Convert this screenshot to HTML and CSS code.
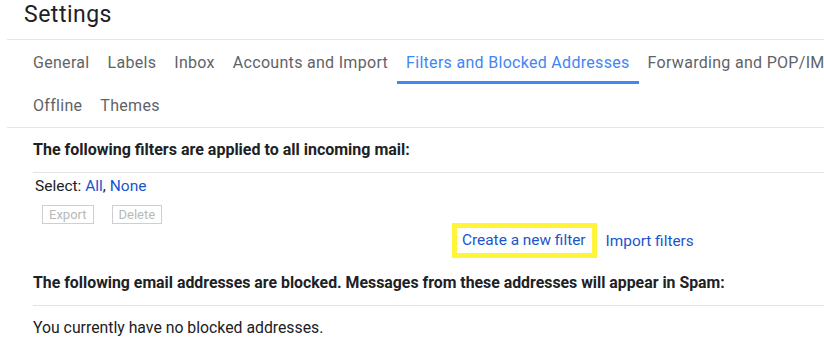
FILE: index.html
```html
<!DOCTYPE html>
<html>
<head>
<meta charset="utf-8">
<link rel="stylesheet" href="styles.css">
</head>
<body>
<div class="page">
  <div class="title">Settings</div>
  <div class="tabs">
    <div class="tab-row">
      <span class="tab">General</span>
      <span class="tab">Labels</span>
      <span class="tab">Inbox</span>
      <span class="tab">Accounts and Import</span>
      <span class="tab active">Filters and Blocked Addresses</span>
      <span class="tab">Forwarding and POP/IMAP</span>
    </div>
    <div class="tab-row last">
      <span class="tab">Offline</span>
      <span class="tab">Themes</span>
    </div>
  </div>
  <div class="section">
    <div class="heading">The following filters are applied to all incoming mail:</div>
    <div class="select">Select: <a class="link">All</a>, <a class="link">None</a></div>
    <div class="actions">
      <button class="btn" disabled>Export</button>
      <button class="btn" disabled>Delete</button>
    </div>
    <div class="create-row">
      <span class="highlight"><a class="link">Create a new filter</a></span>
      <a class="link">Import filters</a>
    </div>
    <div class="heading second">The following email addresses are blocked. Messages from these addresses will appear in Spam:</div>
    <div class="note">You currently have no blocked addresses.</div>
  </div>
</div>
</body>
</html>
```
FILE: styles.css
```css
html, body {
  margin: 0;
  padding: 0;
  background: #fff;
  overflow: hidden;
}
body {
  font-family: Roboto, "Liberation Sans", Arial, sans-serif;
  color: #202124;
  width: 824px;
  height: 356px;
}
.page {
  margin-left: 7px;
  white-space: nowrap;
}
.title {
  height: 39px;
  line-height: 29px;
  font-size: 23px;
  letter-spacing: 0.5px;
  padding-left: 17px;
  color: #202124;
  border-bottom: 1px solid #e6e6e6;
}
.tabs {
  padding-left: 17px;
  border-bottom: 1px solid #e6e6e6;
}
.tab-row {
  display: flex;
  height: 44px;
}
.tab-row.last {
  height: 43px;
}
.tab {
  display: flex;
  align-items: center;
  padding: 0 9px;
  font-size: 16px;
  letter-spacing: 0.3px;
  color: #5f6368;
  flex: none;
}
.tab.active {
  color: #4285f4;
  box-shadow: inset 0 -3px 0 #4285f4;
  height: 44px;
}
.section {
  padding-left: 26px;
  font-size: 16px;
}
.heading {
  font-weight: bold;
  font-size: 16px;
  height: 44px;
  line-height: 44px;
  border-bottom: 1px solid #e3e3e3;
  color: #202124;
}
.heading.second {
  margin-top: 3px;
  font-size: 15.85px;
}
.select {
  padding-left: 2px;
  height: 26px;
  line-height: 26px;
  font-size: 15.5px;
}
.link {
  color: #1a55cc;
  cursor: pointer;
}
.actions {
  display: flex;
  gap: 18px;
  margin-top: 6px;
  padding-left: 9px;
}
.btn {
  font-family: Roboto, "Liberation Sans", Arial, sans-serif;
  font-size: 13px;
  height: 19px;
  padding: 0 6px;
  background: #fff;
  color: #b9b9b9;
  border: 1px solid #cfcfcf;
  border-radius: 0;
  line-height: 17px;
}
.create-row {
  display: flex;
  align-items: center;
  gap: 9px;
  margin-top: -1px;
  padding-left: 419px;
  font-size: 15.4px;
}
.highlight {
  display: block;
  border: 5px solid #fff43a;
  padding: 0 6px 0 5px;
  height: 25px;
  line-height: 25px;
}
.note {
  height: 44px;
  line-height: 44px;
  font-size: 15.8px;
}
```
